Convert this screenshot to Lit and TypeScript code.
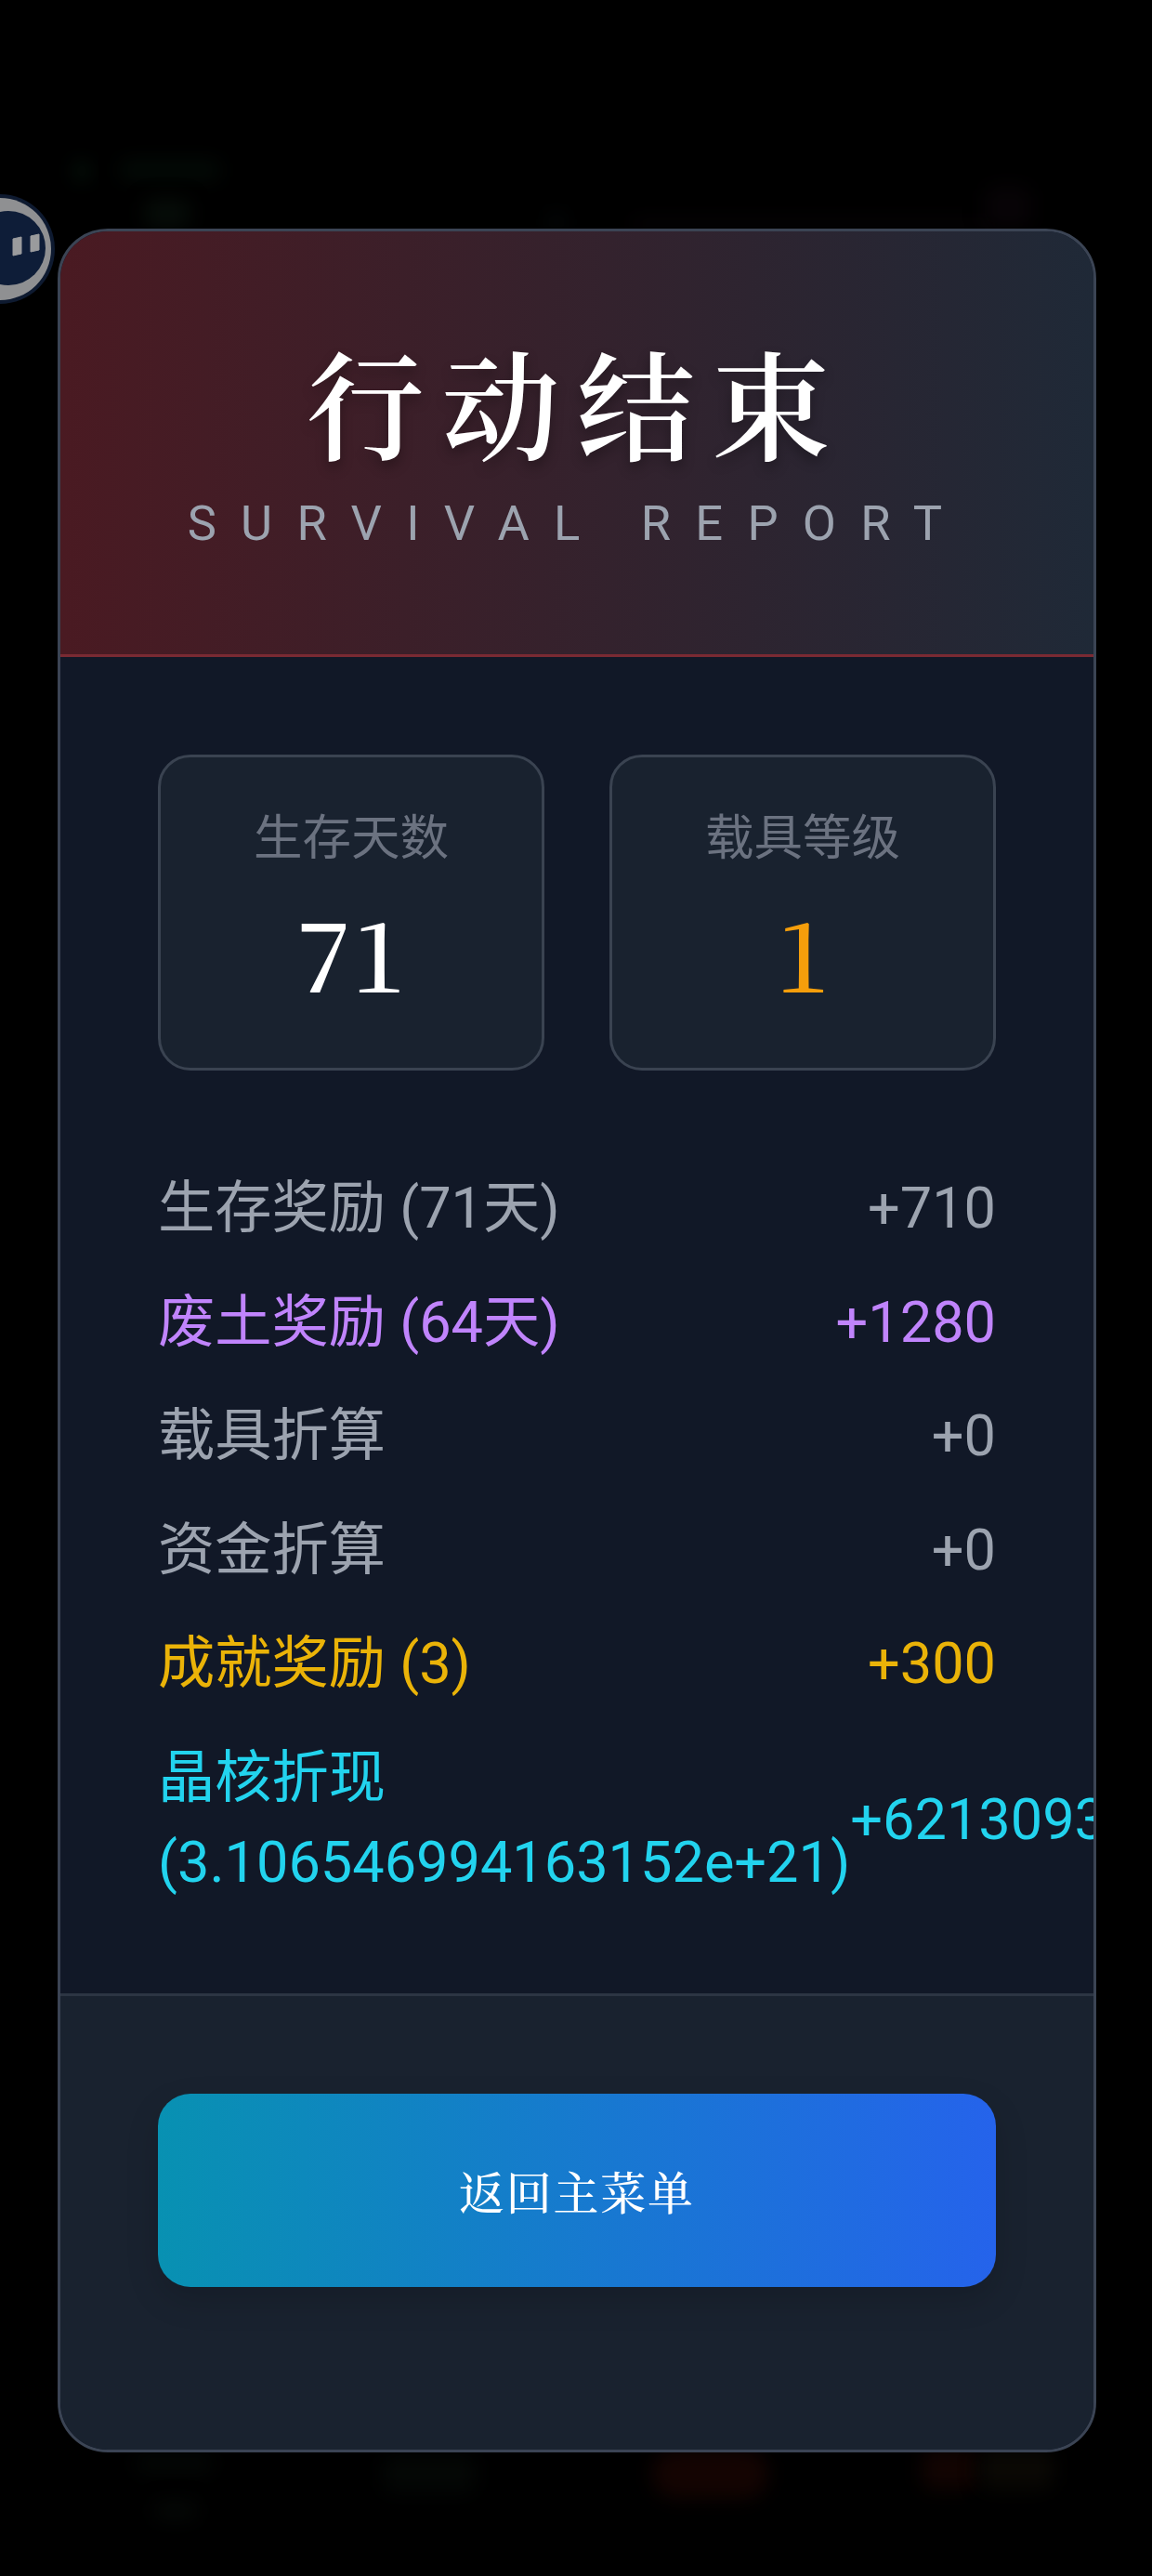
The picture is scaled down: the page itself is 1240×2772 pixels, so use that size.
import { LitElement, html, css } from "lit";
import { customElement } from "lit/decorators.js";

@customElement("app-root")
export class AppRoot extends LitElement {
  static styles = css`
    :host {
      display: block;
      width: 1240px;
      height: 2772px;
      background: #000;
      position: relative;
      overflow: hidden;
      font-family: Roboto, "Noto Sans CJK SC", sans-serif;
    }
    .page {
      display: flex;
      justify-content: flex-start;
      padding: 246px 0 0 62px;
      position: relative;
    }
    .blob { position: absolute; filter: blur(10px); border-radius: 12px; }
    .b1 { left: 80px; top: 174px; width: 16px; height: 20px; background: #05160c; border-radius: 50%; }
    .b2 { left: 128px; top: 172px; width: 110px; height: 22px; background: #030a06; }
    .b3 { left: 155px; top: 214px; width: 50px; height: 32px; background: #060c08; }
    .b4 { left: 590px; top: 230px; width: 18px; height: 18px; background: #060a0b; }
    .b5 { left: 680px; top: 236px; width: 400px; height: 12px; background: #070406; }
    .b6 { left: 1060px; top: 200px; width: 50px; height: 46px; background: #070306; }
    .b7 { left: 145px; top: 2640px; width: 85px; height: 22px; background: #040705; }
    .b8 { left: 165px; top: 2692px; width: 48px; height: 20px; background: #050806; }
    .b9 { left: 412px; top: 2642px; width: 100px; height: 40px; background: #040705; }
    .b10 { left: 702px; top: 2636px; width: 125px; height: 52px; background: #140402; border-radius: 30px; }
    .b11 { left: 992px; top: 2636px; width: 60px; height: 42px; background: #120402; }
    .b12 { left: 1054px; top: 2636px; width: 80px; height: 42px; background: #0a0804; }
    .avatar { position: absolute; left: -60px; top: 208px; width: 120px; height: 120px; }
    .card {
      width: 1118px;
      box-sizing: border-box;
      border: 3.5px solid #3b4454;
      border-radius: 54px;
      background: #111827;
      overflow: hidden;
      position: relative;
      display: flex;
      flex-direction: column;
    }
    .head {
      height: 458px;
      box-sizing: border-box;
      background: linear-gradient(to right, #4a1a22, #1f2937);
      border-bottom: 3.5px solid #7a2a33;
      display: flex;
      flex-direction: column;
      align-items: center;
      padding-top: 107px;
    }
    h1 {
      margin: 0;
      font: 600 127px/150px "Noto Serif CJK SC", "Liberation Serif", serif;
      letter-spacing: 18.5px;
      color: #fff;
      text-shadow: 0 7px 14px rgba(0,0,0,.3);
    }
    .sub {
      font-size: 52.5px;
      line-height: 70px;
      letter-spacing: 26.25px;
      color: #9ca3af;
      margin-top: 22px;
    }
    .body {
      padding: 105px 105px 95.5px;
      display: flex;
      flex-direction: column;
    }
    .stats {
      display: grid;
      grid-template-columns: 1fr 1fr;
      gap: 70px;
      margin-bottom: 103px;
    }
    .stat {
      height: 340px;
      box-sizing: border-box;
      background: #19222f;
      border: 3.5px solid #3a4351;
      border-radius: 35px;
      display: flex;
      flex-direction: column;
      align-items: center;
      padding-top: 52px;
    }
    .stat .l { font-size: 52.5px; line-height: 70px; color: #6b7280; }
    .stat .v {
      font: 500 105px/140px "Noto Serif CJK SC", "Liberation Serif", serif;
      color: #fff;
      margin-top: 16px;
    }
    .stat .v.amber { color: #f59e0b; }
    .rows { display: flex; flex-direction: column; gap: 31.5px; }
    .row {
      display: flex;
      justify-content: space-between;
      align-items: center;
      font-size: 61.25px;
      line-height: 91px;
      color: #9ca3af;
    }
    .row .val { white-space: nowrap; flex-shrink: 0; }
    .purple { color: #c084fc; }
    .yellow { color: #eab308; }
    .cyan { color: #22d3ee; }
    .foot {
      flex: 1;
      background: #19222f;
      border-top: 3.5px solid #2c3543;
      padding: 105px 105px 175px;
    }
    button {
      display: block;
      width: 100%;
      height: 208px;
      border: 0;
      border-radius: 35px;
      background: linear-gradient(to right, #0891b2, #2563eb);
      color: #fff;
      font: 500 49px/60px "Noto Serif CJK SC", "Liberation Serif", serif;
      letter-spacing: 1.75px;
      box-shadow: 0 14px 35px rgba(0,0,0,.15);
    }
  `;

  render() {
    const rows: [string, string, string][] = [
      ["生存奖励 (71天)", "+710", ""],
      ["废土奖励 (64天)", "+1280", "purple"],
      ["载具折算", "+0", ""],
      ["资金折算", "+0", ""],
      ["成就奖励 (3)", "+300", "yellow"],
      ["晶核折现 (3.106546994163152e+21)", "+6213093988326304000000", "cyan"],
    ];
    return html`
      ${["b1","b2","b3","b4","b5","b6","b7","b8","b9","b10","b11","b12"].map(b => html`<div class="blob ${b}"></div>`)}
      <svg class="avatar" viewBox="-60 208 120 120">
        <circle cx="0" cy="268" r="59" fill="#0e1a30"></circle>
        <circle cx="0" cy="268" r="55" fill="#8f9092"></circle>
        <circle cx="9" cy="267" r="40" fill="#0e1d38"></circle>
        <path d="M14 257 L23 255 V273 L14 275 Z" fill="#9a9b9d" stroke="#9a9b9d" stroke-width="1" stroke-linejoin="round"></path>
        <path d="M33 254 L42 252 V269 L33 271 Z" fill="#9a9b9d" stroke="#9a9b9d" stroke-width="1" stroke-linejoin="round"></path>
      </svg>
      <div class="page">
        <div class="card">
          <div class="head">
            <h1>行动结束</h1>
            <div class="sub">SURVIVAL REPORT</div>
          </div>
          <div class="body">
            <div class="stats">
              <div class="stat"><div class="l">生存天数</div><div class="v">71</div></div>
              <div class="stat"><div class="l">载具等级</div><div class="v amber">1</div></div>
            </div>
            <div class="rows">
              ${rows.map(([a, b, c]) => html`<div class="row ${c}"><span>${a}</span><span class="val">${b}</span></div>`)}
            </div>
          </div>
          <div class="foot"><button>返回主菜单</button></div>
        </div>
      </div>
    `;
  }
}
